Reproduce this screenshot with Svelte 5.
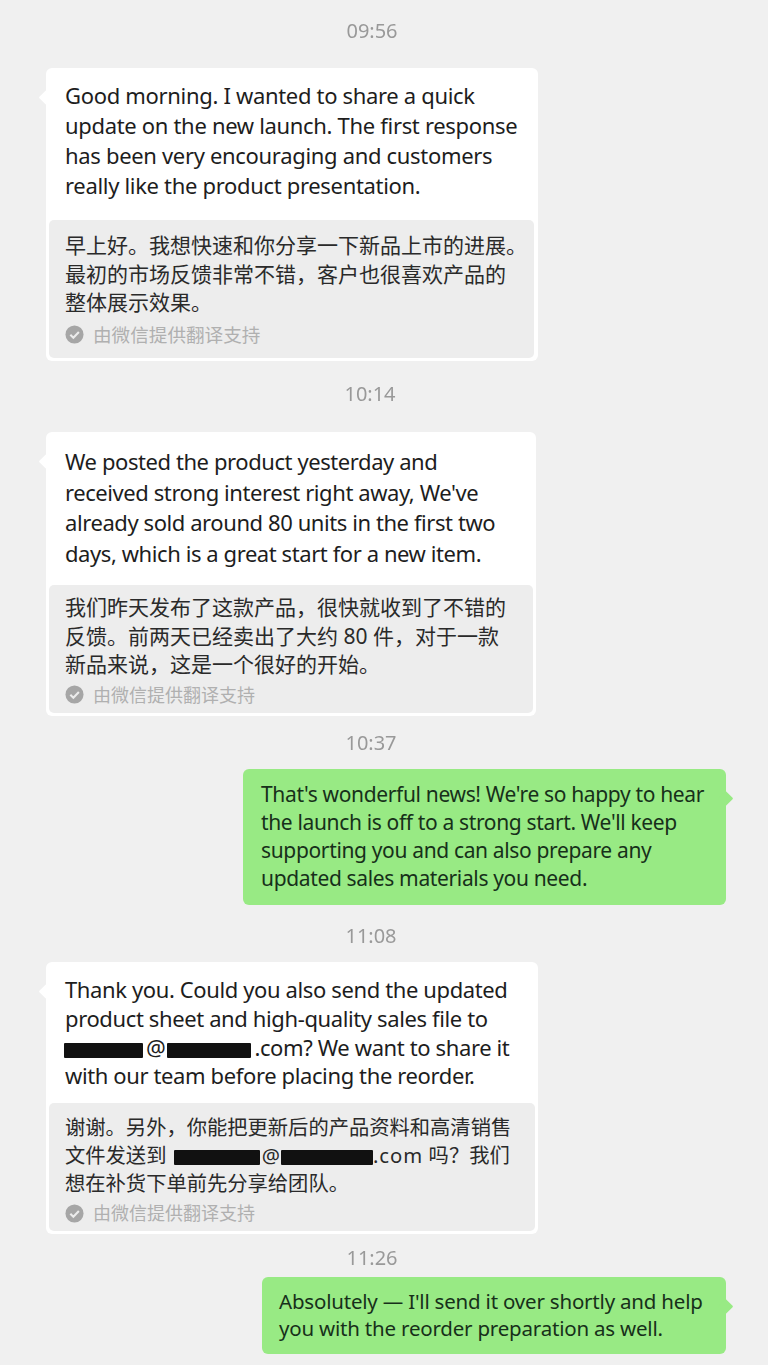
<script>
  const footer = '由微信提供翻译支持';
</script>

{#snippet credit(cls)}
  <div class="credit {cls}">
    <svg class="check" viewBox="0 0 20 20" aria-hidden="true">
      <circle cx="10" cy="10" r="9.5" fill="#a6a6a6" />
      <path d="M5.6 10.3 L8.8 13.4 L14.6 7.4" fill="none" stroke="#ececec" stroke-width="2.2" />
    </svg>
    <span>{footer}</span>
  </div>
{/snippet}

<main class="chat">
  <div class="time t1">09:56</div>
  <section class="bubble in b1">
    <p class="en">Good morning. I wanted to share a quick<br />update on the new launch. The first response<br />has been very encouraging and customers<br />really like the product presentation.</p>
    <div class="panel">
      <p class="cn">早上好。我想快速和你分享一下新品上市的进展。<br />最初的市场反馈非常不错，客户也很喜欢产品的<br />整体展示效果。</p>
      {@render credit('wide')}
    </div>
  </section>

  <div class="time t2">10:14</div>
  <section class="bubble in b2">
    <p class="en">We posted the product yesterday and<br />received strong interest right away, We've<br />already sold around 80 units in the first two<br />days, which is a great start for a new item.</p>
    <div class="panel">
      <p class="cn">我们昨天发布了这款产品，很快就收到了不错的<br />反馈。前两天已经卖出了大约 80 件，对于一款<br />新品来说，这是一个很好的开始。</p>
      {@render credit('')}
    </div>
  </section>

  <div class="time t3">10:37</div>
  <section class="bubble out b3">
    <p>That's wonderful news! We're so happy to hear<br />the launch is off to a strong start. We'll keep<br />supporting you and can also prepare any<br />updated sales materials you need.</p>
  </section>

  <div class="time t4">11:08</div>
  <section class="bubble in b4">
    <p class="en">Thank you. Could you also send the updated<br />product sheet and high-quality sales file to<br /><span class="red r1"></span>@<span class="red r2"></span>.com? We want to share it<br />with our team before placing the reorder.</p>
    <div class="panel">
      <p class="cn">谢谢。另外，你能把更新后的产品资料和高清销售<br />文件发送到 <span class="red r3"></span>@<span class="red r4"></span><span class="com">.com</span> 吗？我们<br />想在补货下单前先分享给团队。</p>
      {@render credit('')}
    </div>
  </section>

  <div class="time t5">11:26</div>
  <section class="bubble out b5">
    <p>Absolutely — I'll send it over shortly and help<br />you with the reorder preparation as well.</p>
  </section>
</main>

<style>
  :global(body) {
    margin: 0;
    background: #f0f0f0;
  }
  .chat {
    width: 768px;
    height: 1365px;
    overflow: hidden;
    box-sizing: border-box;
    display: flex;
    flex-direction: column;
    font-family: "Noto Sans", "Noto Sans CJK SC", sans-serif;
    color: #1d1d1d;
    filter: blur(0.35px);
  }
  p {
    margin: 0;
    white-space: nowrap;
  }
  .time {
    align-self: center;
    font-size: 20px;
    line-height: 26px;
    color: #999;
  }
  .t1 { margin-top: 18px; transform: translateX(-12px); margin-bottom: 24px; }
  .t2 { margin-top: 20px; transform: translateX(-14px); margin-bottom: 25px; }
  .t3 { margin-top: 14px; transform: translateX(-13px); margin-bottom: 13px; }
  .t4 { margin-top: 18px; transform: translateX(-13px); margin-bottom: 13px; }
  .t5 { margin-top: 11px; transform: translateX(-12px); margin-bottom: 6px; }

  .bubble {
    position: relative;
    box-sizing: border-box;
    border-radius: 6px;
    flex: none;
  }
  .bubble::before {
    content: "";
    position: absolute;
    width: 11px;
    height: 11px;
    transform: rotate(45deg);
    top: 24px;
    border-radius: 1px;
  }
  .in {
    background: #fff;
    margin-left: 46px;
    padding: 3px;
  }
  .in::before {
    left: -5px;
    background: #fff;
  }
  .out {
    background: #98ea84;
    align-self: flex-end;
    margin-right: 42px;
    color: #17301a;
  }
  .out::before {
    right: -5px;
    background: #98ea84;
  }
  .en {
    font-size: 22px;
    padding-left: 16px;
    box-sizing: border-box;
  }
  .panel {
    background: #ededed;
    border-radius: 5px;
    box-sizing: border-box;
  }
  .cn {
    font-size: 21px;
    padding-left: 16px;
    color: #2a2a2a;
  }
  .credit {
    display: flex;
    align-items: center;
    gap: 9px;
    padding-left: 16px;
    color: #b0b0b0;
    font-size: 18px;
    line-height: 24px;
    margin-top: 4px;
  }
  .credit.wide {
    font-size: 18.6px;
    margin-top: 6px;
  }
  .check {
    width: 19px;
    height: 19px;
    flex: none;
  }
  .red {
    display: inline-block;
    height: 15px;
    background: #111;
    border-radius: 1px;
    vertical-align: -2px;
  }
  .r1 { width: 79px; margin-left: -1px; margin-right: 3px; }
  .r2 { width: 84px; margin-left: 2px; margin-right: 3px; }
  .r3 { width: 86px; margin-left: 2px; margin-right: 2px; }
  .r4 { width: 92px; margin-left: 1px; }
  .com { letter-spacing: 1px; }

  .b1 { width: 492px; height: 293px; }
  .b1 .en { line-height: 30px; padding-top: 9px; height: 149px; letter-spacing: -0.32px; }
  .b1 .panel { width: 485px; height: 138px; padding-top: 11px; }
  .b1 .cn { line-height: 28.5px; }

  .b2 { width: 490px; height: 284px; }
  .b2 .en { line-height: 30.6px; padding-top: 11px; height: 150px; letter-spacing: -0.42px; }
  .b2 .panel { width: 484px; height: 128px; padding-top: 8px; }
  .b2 .cn { line-height: 28.5px; }

  .b3 { width: 483px; height: 136px; padding: 11px 0 0 18px; }
  .b3 p { font-size: 21px; line-height: 28px; letter-spacing: -0.35px; }

  .b4 { width: 492px; height: 272px; }
  .b4 .en { line-height: 28.8px; padding-top: 10px; height: 138px; letter-spacing: -0.38px; }
  .b4 .panel { width: 486px; height: 128px; padding-top: 10px; }
  .b4 .cn { line-height: 28px; font-size: 20.3px; }

  .b5 { width: 464px; height: 77px; padding: 11px 0 0 17px; }
  .b5 p { font-size: 20.5px; line-height: 27px; letter-spacing: -0.2px; }
</style>
